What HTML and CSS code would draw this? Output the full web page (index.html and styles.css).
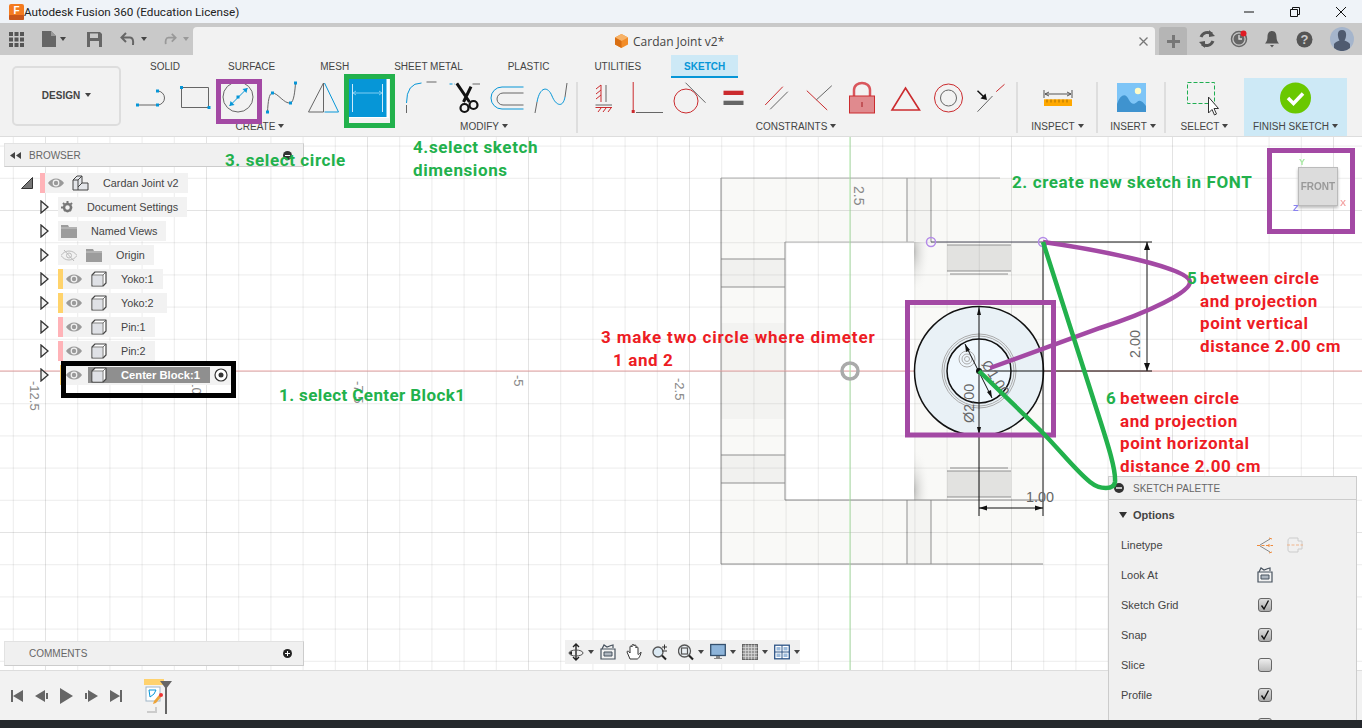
FILE: index.html
```html
<!DOCTYPE html>
<html lang="en">
<head>
  <meta charset="UTF-8" />
  <meta name="viewport" content="width=device-width, initial-scale=1.0"/>
  <title>Cardan Joint v2 - Fusion 360</title>
  <link rel="stylesheet" href="styles.css">
</head>
<body>
  <svg class="sprite" width="0" height="0">
    <symbol id="eye" viewBox="0 0 16 10">
      <path d="M0 5C4 -1 12 -1 16 5C12 11 4 11 0 5Z" fill="#9a9a9a"/>
      <circle cx="8" cy="5" r="3.4" fill="#f2f2f2"/>
      <circle cx="8" cy="5" r="2.2" fill="#9a9a9a"/>
    </symbol>
    <symbol id="cube" viewBox="0 0 16 16">
      <path d="M1 4L4 1H15V12L12 15H1Z" fill="#fff" stroke="#444" stroke-width="1.2" stroke-linejoin="round"/>
      <path d="M1.600 4.600H11.400V14.400H1.600Z" fill="#dfe1e6"/>
      <path d="M1 4H12V15M12 4L15 1" fill="none" stroke="#555" stroke-width=".8"/>
    </symbol>
    <symbol id="folder" viewBox="0 0 16 13">
      <path d="M0 0H7L8 2H16V13H0Z" fill="#9c9c9c"/>
      <path d="M0 3H16" stroke="#c8c8c8" stroke-width="1"/>
    </symbol>
    <symbol id="lookat" viewBox="0 0 16 16">
      <path d="M1 5H15V15H1Z" fill="#f2f2f2" stroke="#47525e" stroke-width="1.2"/>
      <path d="M4 8H12V12H4Z" fill="#aeb6bf" stroke="#47525e" stroke-width="1"/>
      <path d="M2 5L4 1L7 3L11 1.500L13 1V4" fill="none" stroke="#47525e" stroke-width="1.2"/>
    </symbol>
    <symbol id="check" viewBox="0 0 14 14">
      <path d="M3.500 7.500L6 11L10.500 2.500" fill="none" stroke="#111" stroke-width="1.4"/>
    </symbol>
    <symbol id="closed" viewBox="0 0 9 14">
      <path d="M1 1L8 7L1 13Z" fill="#f2f2f2" stroke="#333" stroke-width="1.3"/>
    </symbol>
  </svg>

  <div class="titlebar">
    <svg class="app-icon" width="15" height="16" viewBox="0 0 15 16">
      <rect width="15" height="16" rx="2" fill="#f47b20"/>
      <rect y="11" width="15" height="5" rx="1" fill="#c9561a"/>
      <text x="7.500" y="10" class="app-f">F</text>
    </svg>
    <span class="app-name">Autodesk Fusion 360 (Education License)</span>
    <div class="win-btns">
      <svg width="12" height="12" viewBox="0 0 12 12"><path d="M1 6H11" stroke="#111" stroke-width="1"/></svg>
      <svg width="12" height="12" viewBox="0 0 12 12"><path d="M1.500 3.500H8.500V10.500H1.500ZM3.500 3.500V1.500H10.500V8.500H8.500" fill="none" stroke="#111" stroke-width="1"/></svg>
      <svg width="12" height="12" viewBox="0 0 12 12"><path d="M1 1L11 11M11 1L1 11" stroke="#111" stroke-width="1"/></svg>
    </div>
  </div>

  <div class="tabbar">
    <div class="tab-tools">
      <svg class="t-grid" width="15" height="15" viewBox="0 0 15 15" fill="#555">
        <rect width="4" height="4"/><rect x="5.500" width="4" height="4"/><rect x="11" width="4" height="4"/>
        <rect y="5.500" width="4" height="4"/><rect x="5.500" y="5.500" width="4" height="4"/><rect x="11" y="5.500" width="4" height="4"/>
        <rect y="11" width="4" height="4"/><rect x="5.500" y="11" width="4" height="4"/><rect x="11" y="11" width="4" height="4"/>
      </svg>
      <svg class="t-doc" width="14" height="16" viewBox="0 0 14 16"><path d="M0 0H9L14 5V16H0Z" fill="#666"/><path d="M9 0V5H14" fill="#999"/></svg>
      <i class="caret t-caret1"></i>
      <svg class="t-save" width="15" height="15" viewBox="0 0 15 15"><path d="M0 0H13L15 2V15H0Z" fill="#666"/><rect x="3" y="1.500" width="8" height="4.500" fill="#c9c9c9"/><rect x="3" y="9" width="9" height="6" fill="#c9c9c9"/></svg>
      <svg class="t-undo" width="15" height="14" viewBox="0 0 15 14"><path d="M6 1L1.500 5.500L6 10M2 5.500H10C13 5.500 13.500 9 13 13" fill="none" stroke="#666" stroke-width="2"/></svg>
      <i class="caret t-caret2"></i>
      <svg class="t-redo" width="13" height="14" viewBox="0 0 15 14"><path d="M9 1L13.500 5.500L9 10M13 5.500H5C2 5.500 1.500 9 2 13" fill="none" stroke="#999" stroke-width="2"/></svg>
      <i class="caret caret-dim t-caret3"></i>
    </div>
    <div class="doc-tab">
      <svg class="doc-cube" width="13" height="14" viewBox="0 0 13 14"><path d="M6.500 0L13 3.500V10.500L6.500 14L0 10.500V3.500Z" fill="#f28c28"/><path d="M6.500 7L13 3.500L6.500 0L0 3.500Z" fill="#f7b267"/><path d="M6.500 7V14L0 10.500V3.500Z" fill="#d96f13"/></svg>
      <span class="doc-name">Cardan Joint v2*</span>
      <svg class="doc-close" width="9" height="9" viewBox="0 0 9 9"><path d="M.5 .5L8.500 8.500M8.500 .5L.5 8.500" stroke="#777" stroke-width="1.300"/></svg>
    </div>
    <div class="new-tab"><svg width="13" height="13" viewBox="0 0 13 13"><path d="M6.500 0V13M0 6.500H13" stroke="#777" stroke-width="3"/></svg></div>
    <div class="tab-status">
      <svg width="18" height="18" viewBox="0 0 18 18"><path d="M14 4A7 7 0 0 0 3 7" fill="none" stroke="#555" stroke-width="3"/><path d="M4 14A7 7 0 0 0 15 11" fill="none" stroke="#555" stroke-width="3"/><path d="M11 0L17 6L11 7ZM7 18L1 12L7 11Z" fill="#555"/></svg>
      <svg width="18" height="18" viewBox="0 0 18 18"><circle cx="9" cy="9" r="7.500" fill="none" stroke="#666" stroke-width="1.500"/><circle cx="9" cy="9" r="5.500" fill="#666"/><path d="M9 5V9H12" fill="none" stroke="#ddd" stroke-width="1.300"/><circle cx="13.500" cy="3.500" r="3" fill="#e01b24"/></svg>
      <svg class="st-bell" width="16" height="18" viewBox="0 0 16 18"><path d="M8 1C11.500 1 12.500 4 12.500 7C12.500 10 13.500 12 15 13.500H1C2.500 12 3.500 10 3.500 7C3.500 4 4.500 1 8 1Z" fill="#555"/><path d="M6 15H10L8 17.500Z" fill="#555"/></svg>
      <svg class="st-help" width="17" height="17" viewBox="0 0 17 17"><circle cx="8.500" cy="8.500" r="8" fill="#555"/><text x="8.500" y="13" class="help-mark">?</text></svg>
      <svg class="avatar" width="24" height="24" viewBox="0 0 24 24"><circle cx="12" cy="12" r="12" fill="#a5b5cc"/><path d="M12 3C15.500 3 16.500 6 16 9C15.800 11 15 12.500 14.500 13.500C17 14.500 19 15.500 20 17V21A12 12 0 0 1 4 21V17C5 15.500 7 14.500 9.500 13.500C9 12.500 8.200 11 8 9C7.500 6 8.500 3 12 3Z" fill="#4f5b70"/></svg>
    </div>
  </div>

  <div class="toolbar">
    <div class="design-btn"><span>DESIGN</span><i class="caret"></i></div>
    <div class="toolbar-main">
      <div class="ribbon-tabs">
        <span class="ribbon-tab">SOLID</span>
        <span class="ribbon-tab">SURFACE</span>
        <span class="ribbon-tab">MESH</span>
        <span class="ribbon-tab">SHEET METAL</span>
        <span class="ribbon-tab">PLASTIC</span>
        <span class="ribbon-tab">UTILITIES</span>
        <span class="ribbon-tab active">SKETCH</span>
      </div>
      <div class="ribbon">
        <div class="group group-create">
          <div class="tools">
            <div class="tool"><svg viewBox="0 0 43 40"><path d="M6.500 27H26.500A7 7 0 0 0 26.500 13" class="g"/><path d="M5 25.500h3v3h-3zM25 25.500h3v3h-3zM25 11.500h3v3h-3z" class="bf"/></svg></div>
            <div class="tool"><svg viewBox="0 0 43 40"><path d="M7.500 9.500H34.500V29.500H7.500Z" class="g"/><path d="M6 8h3v3H6zM33.500 28h3v3h-3z" class="bf"/></svg></div>
            <div class="tool"><svg viewBox="0 0 43 40"><circle cx="21" cy="19" r="15" class="g"/><path d="M12.500 28L30.500 10" class="b"/><path d="M30.500 10l-5 1 4 4zM12.500 28l5-1-4-4zM19.500 17.500h3v3h-3z" class="bf"/></svg><b class="mark mark-circle"></b></div>
            <div class="tool"><svg viewBox="0 0 43 40"><path d="M7.500 34C8 24 9 15 12.500 15C18 15 24 26 30.500 25C34 24 35 12 35.500 5" class="g"/><path d="M6 32.500h3v3H6zM11 13.500h3v3h-3zM29 23.500h3v3h-3zM34 3.500h3v3h-3z" class="bf"/></svg></div>
            <div class="tool"><svg viewBox="0 0 43 40"><path d="M5.500 34L20.500 5V34Z" class="g"/><path d="M21.500 5L35.500 34H21.500" class="b"/></svg></div>
            <div class="tool tool-dim"><svg viewBox="0 0 43 40"><rect x="2.500" y="1" width="38" height="38" fill="#0696d7"/><path d="M6.500 6V34M36.500 6V34" stroke="#cfeafa" fill="none"/><path d="M7 15H36M10 13l-3 2 3 2M33 13l3 2-3 2" stroke="#7fcdf3" fill="none"/></svg><b class="mark mark-dim"></b></div>
          </div>
          <div class="group-label">CREATE<i class="caret"></i></div>
        </div>
        <div class="group group-modify">
          <div class="tools">
            <div class="tool"><svg viewBox="0 0 43 40"><path d="M5.500 25Q5.500 5 20.500 5" class="b"/><path d="M25.500 4H35.500M5.500 27V35" class="g"/></svg></div>
            <div class="tool"><svg viewBox="0 0 43 40"><path d="M5.500 6H11" stroke="#0696d7" stroke-dasharray="3 2" fill="none"/><path d="M28.500 6H36" class="g"/><path d="M12.800 5.300L25.500 24M27 8.600L19.500 24" stroke="#111" stroke-width="3" fill="none"/><circle cx="20.500" cy="30" r="4" fill="none" stroke="#111" stroke-width="2.200"/><circle cx="29.500" cy="27" r="4" fill="none" stroke="#111" stroke-width="2.200"/></svg></div>
            <div class="tool"><svg viewBox="0 0 43 40"><path d="M36.500 9H15A11 11 0 0 0 15 31H36.500" class="b"/><path d="M36.500 15H16A6 6 0 0 0 16 27H36.500" class="g"/></svg></div>
            <div class="tool"><svg viewBox="0 0 43 40"><path d="M7 24C10 8 18 8 22 18C26 28 33 30 35 19" class="b"/><path d="M7 24L5 35M35 19L37 5" class="g"/></svg></div>
          </div>
          <div class="group-label">MODIFY<i class="caret"></i></div>
        </div>
        <div class="group group-constraints">
          <div class="tools">
            <div class="tool"><svg viewBox="0 0 43 40"><path d="M18 7V24M13 11l5-4M13 16l5-4M13 21l5-4M12.500 29.500H29M15 34l3-4M20 34l3-4M25 34l3-4" class="r"/><path d="M23 7V24M12.500 27H29" class="g"/></svg></div>
            <div class="tool"><svg viewBox="0 0 43 40"><path d="M7.200 4V32" class="r"/><rect x="5.700" y="32" width="3" height="3" fill="#cb2b2e"/><path d="M10 34.500H37" class="g"/></svg></div>
            <div class="tool"><svg viewBox="0 0 43 40"><circle cx="17" cy="23" r="12" class="r"/><path d="M16.500 4.700L36.500 24.700" class="g"/></svg></div>
            <div class="tool"><svg viewBox="0 0 43 40"><rect x="11.500" y="12.700" width="20" height="4.300" fill="#cb2b2e"/><rect x="11.500" y="22.700" width="20" height="4.300" fill="#666"/></svg></div>
            <div class="tool"><svg viewBox="0 0 43 40"><path d="M10.200 27L27.800 8.700" class="r"/><path d="M15.200 31.300L32.800 13.700" class="g"/></svg></div>
            <div class="tool"><svg viewBox="0 0 43 40"><path d="M8.800 12.700L29.200 32" class="r"/><path d="M18.200 22L33.800 7.700" class="g"/></svg></div>
            <div class="tool"><svg viewBox="0 0 43 40"><path d="M13 18V12C13 2.500 29 2.500 29 12V18" fill="none" stroke="#d9565c" stroke-width="2.500"/><rect x="8.500" y="18" width="25" height="17" fill="#e08a8e" stroke="#cb2b2e"/><path d="M21 24V29" stroke="#a51d22"/></svg></div>
            <div class="tool"><svg viewBox="0 0 43 40"><path d="M21.500 10L35.500 32H8Z" class="r r2"/></svg></div>
            <div class="tool"><svg viewBox="0 0 43 40"><circle cx="21.500" cy="20" r="14" class="r"/><circle cx="21.500" cy="20" r="8" class="g"/></svg></div>
            <div class="tool"><svg viewBox="0 0 43 40"><path d="M7.500 33.700L22.500 18" class="g"/><path d="M26.200 13.700L34.500 6.300" class="r"/><path d="M7.500 12.700L14 19" stroke="#111" stroke-width="1.500" fill="none"/><path d="M17 22L10.500 20.500L15.500 15.500Z" fill="#111"/></svg></div>
          </div>
          <div class="group-label">CONSTRAINTS<i class="caret"></i></div>
        </div>
        <div class="group group-inspect">
          <div class="tools">
            <div class="tool"><svg viewBox="0 0 43 40"><path d="M8 12V20M36 12V20M9 16H35M13 14l-4 2 4 2M31 14l4 2-4 2" stroke="#555" fill="none"/><rect x="8" y="21.300" width="28" height="6.700" fill="#ffa800"/><path d="M11 21.500v3M15 21.500v3M19 21.500v3M23 21.500v3M27 21.500v3M31 21.500v3" stroke="#a86f00"/></svg></div>
          </div>
          <div class="group-label">INSPECT<i class="caret"></i></div>
        </div>
        <div class="group group-insert">
          <div class="tools">
            <div class="tool"><svg viewBox="0 0 43 40"><rect x="7" y="5" width="29" height="29" fill="#7ec5f7"/><circle cx="28" cy="13" r="3.200" fill="#fffcc8"/><path d="M7 26C11 15 16 15 19 22C21 26 24 27 27 24C30 21 33 24 36 28V34H7Z" fill="#3f93cf"/></svg></div>
          </div>
          <div class="group-label">INSERT<i class="caret"></i></div>
        </div>
        <div class="group group-select">
          <div class="tools">
            <div class="tool"><svg viewBox="0 0 43 40"><rect x="4.500" y="4.500" width="27" height="21" fill="none" stroke="#1fae51" stroke-dasharray="4 2"/><path d="M25.500 19V35L29 31.500L31.500 37L33.500 36L31 30.500H35.500Z" fill="#fff" stroke="#333"/></svg></div>
          </div>
          <div class="group-label">SELECT<i class="caret"></i></div>
        </div>
        <div class="group group-finish">
          <div class="tools">
            <div class="tool"><svg viewBox="0 0 43 40"><circle cx="21.500" cy="20" r="15.500" fill="#6ac800"/><path d="M14 20L19.500 25.500L29 15.500" fill="none" stroke="#fff" stroke-width="3.500"/></svg></div>
          </div>
          <div class="group-label">FINISH SKETCH<i class="caret"></i></div>
        </div>
      </div>
    </div>
  </div>

  <div class="workspace">
    <div class="canvas">
      <svg class="layer" viewBox="0 137 1362 533">
        <defs>
          <pattern id="grid" patternUnits="userSpaceOnUse" x="45" y="49" width="161" height="161">
            <path d="M32.700 0V161M64.900 0V161M97.100 0V161M129.300 0V161M0 32.700H161M0 64.900H161M0 97.100H161M0 129.300H161" stroke="#000" stroke-opacity=".07" fill="none"/>
            <path d="M.5 0V161M0 .5H161" stroke="#000" stroke-opacity=".11" fill="none"/>
          </pattern>
          <radialGradient id="shade-top" cx="0" cy=".2" r=".9">
            <stop offset="0" stop-color="#c4c4c2"/><stop offset="1" stop-color="#f9f9f7" stop-opacity="0"/>
          </radialGradient>
          <radialGradient id="shade-bottom" cx="0" cy=".8" r=".9">
            <stop offset="0" stop-color="#c4c4c2"/><stop offset="1" stop-color="#f9f9f7" stop-opacity="0"/>
          </radialGradient>
        </defs>
        <rect x="721" y="178" width="322" height="386" fill="#f9f9f7"/>
        <rect x="721" y="259" width="64" height="28" fill="#f1f1ef"/>
        <rect x="721" y="455" width="64" height="28" fill="#f1f1ef"/>
        <rect x="721" y="323" width="64" height="96" fill="#f3f3f1"/>
        <rect x="907" y="178" width="24" height="64" fill="#f4f4f2"/>
        <rect x="907" y="500" width="24" height="64" fill="#f4f4f2"/>
        <rect x="785" y="242" width="129" height="258" fill="#fff"/>
        <rect x="914" y="242" width="18" height="48" fill="url(#shade-top)"/>
        <rect x="914" y="452" width="18" height="48" fill="url(#shade-bottom)"/>
        <rect x="947" y="245" width="64" height="26" fill="#e2e2e0"/>
        <rect x="947" y="471" width="64" height="26" fill="#e2e2e0"/>
        <path d="M721 178V564H1043M721 259H785M721 287H785M721 455H785M721 483H785M907 178V242M931 178V242M907 500V564M931 500V564M785 242V500H1043M947 245H1011M947 271H1011M950 274H1008M950 468H1008M947 471H1011M947 497H1011" class="edge"/>
        <path d="M721 178H1000M785 242H914" class="edge-soft"/>
        <rect x="0" y="137" width="1362" height="533" fill="url(#grid)"/>
        <path d="M0 371H1362" stroke="#e8a3a3"/>
        <path d="M850 137V670" stroke="#a9e4a3"/>
        <circle cx="850" cy="371" r="8" fill="none" stroke="#aaa" stroke-width="3.500"/>

        <circle cx="979" cy="371" r="64.500" fill="#e9f1f6" stroke="#111" stroke-width="1.500"/>
        <circle cx="979" cy="371" r="37" fill="none" stroke="#aaa"/>
        <circle cx="979" cy="371" r="35" fill="none" stroke="#aaa"/>
        <circle cx="979" cy="371" r="32" fill="#eff7fd" stroke="#111" stroke-width="1.500"/>
        <circle cx="967" cy="359" r="8" fill="none" stroke="#aaa"/>
        <circle cx="967" cy="359" r="5" fill="none" stroke="#aaa"/>
        <circle cx="967" cy="359" r="2.500" fill="none" stroke="#aaa"/>
        <path d="M931 242H1043" stroke="#445"/>
        <path d="M1043 242V516M1043 242H1152M979 371H1152M979 307V516M1147 242V371M979 508H1043M965 344L992 398" stroke="#111" fill="none"/>
        <path d="M979 307l-2 8h4zM979 435l-2-8h4zM1147 242l-3 8h6zM1147 371l-3-8h6zM979 508l8-2.500v5zM1043 508l-8-2.500v5zM965 344l1 8 4-2zM992 398l-1-8-4 2z" fill="#111"/>
        <circle cx="979" cy="371" r="3" fill="#111"/>
        <circle cx="931" cy="242" r="4.500" fill="none" stroke="#b48be8" stroke-width="1.500"/>
        <circle cx="1043" cy="242" r="4.500" fill="none" stroke="#b48be8" stroke-width="1.500"/>

        <text x="0" y="0" class="dim" transform="translate(1140 358) rotate(-90)">2.00</text>
        <text x="1026" y="502" class="dim">1.00</text>
        <text x="0" y="0" class="dim" transform="translate(974 423) rotate(-90)">Ø2.00</text>
        <text x="0" y="0" class="dim" transform="translate(981 364) rotate(58)">Ø1.00</text>

        <text x="0" y="0" class="axis axis-big" transform="translate(854 186) rotate(90)">2.5</text>
        <text x="0" y="0" class="axis" transform="translate(30 381) rotate(90)">-12.5</text>
        <text x="0" y="0" class="axis" transform="translate(192 376) rotate(90)">-10</text>
        <text x="0" y="0" class="axis" transform="translate(354 381) rotate(90)">-7.5</text>
        <text x="0" y="0" class="axis" transform="translate(514 375) rotate(90)">-5</text>
        <text x="0" y="0" class="axis" transform="translate(675 378) rotate(90)">-2.5</text>
      </svg>

      <div class="browser">
        <div class="panel-head">
          <svg class="collapse" width="11" height="7" viewBox="0 0 11 7"><path d="M5 0V7L0 3.500ZM11 0V7L6 3.500Z" fill="#444"/></svg>
          <span class="panel-title">BROWSER</span>
          <svg class="panel-btn" width="9" height="9" viewBox="0 0 9 9"><circle cx="4.500" cy="4.500" r="4.500" fill="#333"/><path d="M2 4.500H7" stroke="#fff"/></svg>
        </div>
        <div class="tree">
          <div class="row row-root">
            <svg class="arrow-open" width="12" height="12" viewBox="0 0 12 12"><path d="M11.500 .5V11.500H.5Z" fill="#777" stroke="#333"/></svg>
            <div class="node node-root strip-pink">
              <svg class="ic-eye"><use href="#eye"/></svg>
              <svg class="ic-cubes" width="17" height="16" viewBox="0 0 17 16"><path d="M1 5L5 1H10V8H16V15H1Z" fill="#e4e6ea" stroke="#444"/><path d="M1 5H6V15M6 5L10 1M10 8L6 12" fill="none" stroke="#444"/></svg>
              <span class="name name-root">Cardan Joint v2</span>
            </div>
          </div>
          <div class="row">
            <svg class="arrow"><use href="#closed"/></svg>
            <div class="node">
              <svg class="ic-gear" width="13" height="13" viewBox="0 0 13 13"><circle cx="6.500" cy="6.500" r="3.500" fill="none" stroke="#777" stroke-width="2.500"/><path d="M6.500 0V13M0 6.500H13M2 2L11 11M11 2L2 11" stroke="#777" stroke-width="2" stroke-dasharray="2 7.200"/></svg>
              <span class="name name-doc">Document Settings</span>
            </div>
          </div>
          <div class="row">
            <svg class="arrow"><use href="#closed"/></svg>
            <div class="node">
              <svg class="ic-folder"><use href="#folder"/></svg>
              <span class="name name-views">Named Views</span>
            </div>
          </div>
          <div class="row">
            <svg class="arrow"><use href="#closed"/></svg>
            <div class="node">
              <svg class="ic-eye-off" width="16" height="11" viewBox="0 0 16 11"><path d="M0 5.500C4 -.5 12 -.5 16 5.500C12 11.500 4 11.500 0 5.500Z" fill="none" stroke="#bbb"/><circle cx="8" cy="5.500" r="2.500" fill="none" stroke="#bbb"/><path d="M3 0L13 11" stroke="#bbb"/></svg>
              <svg class="ic-folder ic-folder-b"><use href="#folder"/></svg>
              <span class="name name-origin">Origin</span>
            </div>
          </div>
          <div class="row">
            <svg class="arrow"><use href="#closed"/></svg>
            <div class="node strip-yellow">
              <svg class="ic-eye"><use href="#eye"/></svg>
              <svg class="ic-cube"><use href="#cube"/></svg>
              <span class="name">Yoko:1</span>
            </div>
          </div>
          <div class="row">
            <svg class="arrow"><use href="#closed"/></svg>
            <div class="node strip-yellow">
              <svg class="ic-eye"><use href="#eye"/></svg>
              <svg class="ic-cube"><use href="#cube"/></svg>
              <span class="name name-yoko2">Yoko:2</span>
            </div>
          </div>
          <div class="row">
            <svg class="arrow"><use href="#closed"/></svg>
            <div class="node strip-pink">
              <svg class="ic-eye"><use href="#eye"/></svg>
              <svg class="ic-cube"><use href="#cube"/></svg>
              <span class="name">Pin:1</span>
            </div>
          </div>
          <div class="row">
            <svg class="arrow"><use href="#closed"/></svg>
            <div class="node strip-pink">
              <svg class="ic-eye"><use href="#eye"/></svg>
              <svg class="ic-cube"><use href="#cube"/></svg>
              <span class="name">Pin:2</span>
            </div>
          </div>
          <div class="row row-selected">
            <svg class="arrow"><use href="#closed"/></svg>
            <div class="node strip-yellow">
              <svg class="ic-eye"><use href="#eye"/></svg>
              <div class="selected">
                <svg class="ic-cube"><use href="#cube"/></svg>
                <span class="name name-selected">Center Block:1</span>
              </div>
              <svg class="ic-radio" width="14" height="14" viewBox="0 0 14 14"><circle cx="7" cy="7" r="6" fill="#fff" stroke="#333" stroke-width="1.200"/><circle cx="7" cy="7" r="2.500" fill="#333"/></svg>
            </div>
            <b class="mark-black"></b>
          </div>
        </div>
      </div>

      <div class="comments">
        <span class="panel-title">COMMENTS</span>
        <svg class="panel-btn" width="9" height="9" viewBox="0 0 9 9"><circle cx="4.500" cy="4.500" r="4.500" fill="#222"/><path d="M2 4.500H7M4.500 2V7" stroke="#fff"/></svg>
      </div>

      <div class="viewcube">
        <span class="cube-face">FRONT</span>
        <span class="cube-y">Y</span>
        <span class="cube-z">Z</span>
        <span class="cube-x">X</span>
      </div>

      <div class="navbar">
        <svg class="nav-ic" viewBox="0 0 16 18"><path d="M8 1V17M5 4L8 1L11 4M5 14L8 17L11 14" fill="none" stroke="#222" stroke-width="1.400"/><ellipse cx="8" cy="10" rx="7" ry="3" fill="none" stroke="#555"/><path d="M1 10L4 8V12Z" fill="#222"/></svg><i class="caret nav-caret"></i>
        <svg class="nav-ic nav-solo"><use href="#lookat"/></svg>
        <svg class="nav-ic nav-solo" viewBox="0 0 16 18"><path d="M4 16L1 9C1 7.500 3 8 4 10V4C4 2.500 6 2.500 6 4V2.500C6 1 8 1 8 2.500V3C8 1.500 10 1.500 10 3V5C10 3.500 12 3.500 12 5V11C12 13 15 9 15 9C15 11 13 16 11 16Z" fill="#fff" stroke="#333"/></svg>
        <svg class="nav-ic nav-solo" viewBox="0 0 16 18"><circle cx="6" cy="9" r="5" fill="#dbe9f3" stroke="#555" stroke-width="1.300"/><path d="M10 12.500L14 16.500" stroke="#222" stroke-width="2"/><path d="M10 4H15M12.500 1.500V6.500M10 8H15" stroke="#333"/></svg>
        <svg class="nav-ic" viewBox="0 0 16 18"><circle cx="6.500" cy="8" r="6" fill="#eaf0f4" stroke="#555" stroke-width="1.300"/><rect x="3.500" y="5" width="6" height="6" fill="none" stroke="#555" stroke-width="1.200"/><path d="M11 12.500L15 16.500" stroke="#222" stroke-width="2.200"/></svg><i class="caret nav-caret"></i>
        <svg class="nav-ic" viewBox="0 0 16 18"><rect x=".7" y="1.500" width="14.600" height="11" fill="#8db4da" stroke="#34506e" stroke-width="1.300"/><path d="M6 13H10V15H12V16H4V15H6Z" fill="#888"/></svg><i class="caret nav-caret"></i>
        <svg class="nav-ic" viewBox="0 0 16 18"><rect x=".5" y="1.500" width="15" height="15" fill="#9a9a9a" stroke="#666"/><path d="M3.500 1.500V16.500M6.500 1.500V16.500M9.500 1.500V16.500M12.500 1.500V16.500M.5 4.500H15.500M.5 7.500H15.500M.5 10.500H15.500M.5 13.500H15.500" stroke="#ddd" stroke-width=".7"/></svg><i class="caret nav-caret"></i>
        <svg class="nav-ic" viewBox="0 0 16 18"><rect x=".7" y="2.200" width="14.600" height="13.600" fill="#fff" stroke="#2d5486" stroke-width="1.300"/><path d="M8 2V16M1 9H15" stroke="#2d5486"/><path d="M2.500 4H6.500V7.500H2.500ZM9.500 4H13.500V7.500H9.500ZM2.500 10.500H6.500V14H2.500ZM9.500 10.500H13.500V14H9.500Z" fill="#9cbbdc"/></svg><i class="caret nav-caret"></i>
      </div>

      <svg class="layer layer-notes" viewBox="0 137 1362 533">
        <rect x="907.500" y="302.500" width="146" height="132.500" class="frame"/>
        <rect x="1269.500" y="150.500" width="83" height="81" class="frame"/>
        <path d="M1043 242C1100 250 1190 268 1190 282C1190 292 1150 312 1100 328L990 368" class="scrawl-purple"/>
        <path d="M1043 242L1100 420C1108 445 1116 470 1115 482C1114 490 1100 490 1090 482C1075 470 1060 450 1040 430L979 371" class="scrawl-green"/>
        <text x="225" y="166" class="note green">3. select circle</text>
        <text x="413" y="153" class="note green">4.select sketch</text>
        <text x="413" y="176" class="note green">dimensions</text>
        <text x="1012" y="188" class="note green">2. create new sketch in FONT</text>
        <text x="279" y="401" class="note green note-tight">1. select Center Block1</text>
        <text x="601" y="343" class="note red note-wide">3 make two circle where dimeter</text>
        <text x="613" y="366" class="note red">1 and 2</text>
        <text x="1187" y="284" class="note green">5</text>
        <text x="1200" y="284" class="note red">between circle</text>
        <text x="1200" y="307" class="note red">and projection</text>
        <text x="1200" y="329" class="note red">point vertical</text>
        <text x="1200" y="352" class="note red">distance 2.00 cm</text>
        <text x="1106" y="404" class="note green">6</text>
        <text x="1120" y="404" class="note red">between circle</text>
        <text x="1120" y="427" class="note red">and projection</text>
        <text x="1120" y="449" class="note red">point horizontal</text>
        <text x="1120" y="472" class="note red">distance 2.00 cm</text>
      </svg>
    </div>

    <div class="timeline">
      <svg class="tl-ctrl" width="12" height="12" viewBox="0 0 12 12"><path d="M0 0H2V12H0ZM12 0V12L2 6Z" fill="#666"/></svg>
      <svg class="tl-ctrl" width="13" height="12" viewBox="0 0 13 12"><path d="M10 0V12L0 6ZM11 3H13V9H11Z" fill="#666"/></svg>
      <svg class="tl-ctrl" width="13" height="16" viewBox="0 0 13 16"><path d="M0 0L13 8L0 16Z" fill="#666"/></svg>
      <svg class="tl-ctrl" width="13" height="12" viewBox="0 0 13 12"><path d="M3 0V12L13 6ZM0 3H2V9H0Z" fill="#666"/></svg>
      <svg class="tl-ctrl" width="12" height="12" viewBox="0 0 12 12"><path d="M0 0V12L10 6ZM10 0H12V12H10Z" fill="#666"/></svg>
      <svg class="tl-sketch" width="30" height="36" viewBox="0 0 30 36">
        <rect x="0" y="0" width="20" height="6" fill="#ffd26e"/>
        <rect x="2" y="8" width="14" height="14" fill="#fff" stroke="#9fb6c8"/>
        <path d="M5 11H12L10 15L6 18Z" fill="none" stroke="#0696d7"/>
        <path d="M10 22L15 16L17 18L12 24L9 25Z" fill="#eda43a"/>
        <circle cx="17" cy="16" r="2" fill="#e33"/>
        <path d="M3 33H12V28" fill="none" stroke="#ccc" stroke-width="2"/>
        <path d="M16 2H28L22 10Z" fill="#666"/>
        <path d="M22 8V35" stroke="#666" stroke-width="2"/>
      </svg>
    </div>

    <div class="palette">
      <div class="palette-head">
        <svg class="palette-min" width="10" height="10" viewBox="0 0 10 10"><circle cx="5" cy="5" r="5" fill="#333"/><path d="M2 5H8" stroke="#fff" stroke-width="1.400"/></svg>
        <span class="panel-title">SKETCH PALETTE</span>
      </div>
      <div class="palette-body">
        <div class="opt-head"><i class="opt-arrow"></i>Options</div>
        <div class="opt"><span class="opt-label">Linetype</span>
          <svg class="opt-ic" width="17" height="17" viewBox="0 0 17 17"><path d="M0 8.500H16" stroke="#ee8a3c" stroke-dasharray="3 1.500"/><path d="M3 8L13 2M3 9L13 15" stroke="#888"/><path d="M12 1l3 1M12 16l3-1M12 7v3" stroke="#ee8a3c"/></svg>
          <svg class="opt-ic opt-ic-b" width="16" height="16" viewBox="0 0 16 16"><path d="M3 1H11V4H15V12H11V15H3C1 15 1 13 1 12V4C1 2 2 1 3 1Z" fill="none" stroke="#ccc"/><path d="M0 8H16" stroke="#f0b48a" stroke-dasharray="3 1.500"/></svg>
        </div>
        <div class="opt"><span class="opt-label">Look At</span><svg class="opt-ic" width="16" height="16"><use href="#lookat"/></svg></div>
        <div class="opt"><span class="opt-label">Sketch Grid</span><span class="check on"><svg width="14" height="14"><use href="#check"/></svg></span></div>
        <div class="opt"><span class="opt-label">Snap</span><span class="check on"><svg width="14" height="14"><use href="#check"/></svg></span></div>
        <div class="opt"><span class="opt-label">Slice</span><span class="check"></span></div>
        <div class="opt"><span class="opt-label">Profile</span><span class="check on"><svg width="14" height="14"><use href="#check"/></svg></span></div>
        <div class="opt"><span class="opt-label"></span><span class="check on"><svg width="14" height="14"><use href="#check"/></svg></span></div>
      </div>
    </div>
  </div>

  <div class="statusbar"></div>
</body>
</html>
```

FILE: styles.css
```css
html, body {
  margin: 0;
  padding: 0;
  height: 100%;
  overflow: hidden;
}

body {
  display: flex;
  flex-direction: column;
  font-family: "Liberation Sans", Arial, sans-serif;
  color: #444;
  background: #fff;
}

.sprite {
  position: absolute;
}

.caret {
  display: inline-block;
  width: 0;
  height: 0;
  border-left: 3px solid transparent;
  border-right: 3px solid transparent;
  border-top: 4px solid #444;
}

.caret-dim {
  border-top-color: #999;
}

/* title bar */
.titlebar {
  height: 23px;
  flex: none;
  display: flex;
  align-items: center;
  background: #eff3f8;
  padding-left: 9px;
}

.app-f {
  font: bold 10px "Liberation Sans", sans-serif;
  fill: #fff;
  text-anchor: middle;
}

.app-name {
  margin-left: 0;
  font: 11.7px Roboto, sans-serif;
  color: #222;
}

.win-btns {
  margin-left: auto;
  display: flex;
  gap: 34px;
  padding-right: 15px;
}

/* tab bar */
.tabbar {
  height: 32px;
  flex: none;
  display: flex;
  background: #c9c9c9;
}

.tab-tools {
  width: 193px;
  flex: none;
  display: flex;
  align-items: center;
  padding-left: 9px;
  box-sizing: border-box;
}

.t-doc { margin-left: 18px; }
.t-caret1 { margin-left: 4px; }
.t-save { margin-left: 21px; }
.t-undo { margin-left: 18px; }
.t-caret2 { margin-left: 6px; }
.t-redo { margin-left: 17px; }
.t-caret3 { margin-left: 6px; }

.doc-tab {
  flex: 1;
  margin-top: 4px;
  display: flex;
  align-items: center;
  position: relative;
  background: #f2f2f2;
  border-radius: 4px 4px 0 0;
  padding-left: 422px;
}

.doc-name {
  margin-left: 5px;
  font: 12px "Open Sans", sans-serif;
  color: #444;
}

.doc-close {
  margin-left: auto;
  margin-right: 7px;
}

.new-tab {
  width: 28px;
  flex: none;
  margin: 4px 0 0 4px;
  display: flex;
  align-items: center;
  justify-content: center;
  background: #b5b5b5;
  border-radius: 3px 3px 0 0;
}

.tab-status {
  width: 175px;
  flex: none;
  display: flex;
  align-items: center;
  gap: 14px;
  padding-left: 11px;
  box-sizing: border-box;
}

.st-bell { margin-left: 2px; }
.st-help { margin-left: 2px; }
.avatar { margin-left: 3px; }

/* toolbar */
.toolbar {
  height: 82px;
  flex: none;
  display: flex;
  background: #f2f2f2;
  border-bottom: 1px solid #ddd;
  box-sizing: border-box;
}

.design-btn {
  width: 109px;
  height: 60px;
  margin: 11px 10px 0 12px;
  flex: none;
  box-sizing: border-box;
  border: 2px solid #ddd;
  border-radius: 5px;
  padding-bottom: 2px;
  display: flex;
  align-items: center;
  justify-content: center;
  gap: 5px;
  font-size: 10px;
  font-weight: bold;
  color: #444;
}

.toolbar-main {
  flex: 1;
  display: flex;
  flex-direction: column;
}

.ribbon-tabs {
  height: 23px;
  flex: none;
  display: flex;
  gap: 19px;
  padding-left: 6px;
}

.ribbon-tab {
  padding: 0 13px;
  line-height: 23px;
  font-size: 10px;
  color: #444;
}

.ribbon-tab:first-child {
  margin-right: 3px;
}

.ribbon-tab.active {
  height: 23px;
  box-sizing: border-box;
  background: #cde9f6;
  border-bottom: 2px solid #0696d7;
  color: #0696d7;
  font-weight: bold;
  margin-left: -2px;
}

.ribbon {
  flex: 1;
  display: flex;
}

.group {
  display: flex;
  flex-direction: column;
  align-items: center;
  box-sizing: border-box;
}

.group-create { width: 258px; margin-right: 12px; }
.group-modify { width: 172px; margin-right: 10px; }
.group-constraints { width: 430px; margin-right: 5px; }
.group-inspect { width: 79px; }
.group-insert { width: 68px; }
.group-select { width: 79px; }
.group-finish { width: 103px; background: #cde9f6; }

.group-modify .group-label {
  padding-right: 6px;
}

.group-constraints .group-label {
  padding-right: 4px;
}

.group-insert .group-label {
  padding-left: 4px;
}

.group-modify,
.group-constraints,
.group-inspect,
.group-insert {
  position: relative;
}

.group-modify::after,
.group-constraints::after,
.group-inspect::after,
.group-insert::after {
  content: "";
  position: absolute;
  top: 4px;
  bottom: 3px;
  right: -1px;
  width: 2px;
  background: #dedede;
}

.group-modify::after { right: -5px; }
.group-constraints::after { right: -5px; }

.tools {
  display: flex;
  height: 40px;
  flex: none;
}

.tool {
  width: 43px;
  height: 40px;
  position: relative;
}

.tool svg {
  display: block;
  width: 43px;
  height: 40px;
}

.g { fill: none; stroke: #666; stroke-width: 1; }
.b { fill: none; stroke: #0696d7; stroke-width: 1; }
.r { fill: none; stroke: #cb2b2e; stroke-width: 1; }
.r2 { stroke-width: 1.6; }
.bf { fill: #0696d7; }

.mark {
  position: absolute;
  box-sizing: border-box;
  border-style: solid;
  border-width: 5px;
}

.mark-circle {
  left: -1px;
  top: 1px;
  width: 46px;
  height: 45px;
  border-color: #a349a4;
}

.mark-dim {
  left: -2px;
  top: -4px;
  width: 51px;
  height: 54px;
  border-color: #22b14c;
}

.tool-dim {
  background: linear-gradient(#fff, #fff) no-repeat 2px 1px / 44px 45px;
}

.group-label {
  display: flex;
  align-items: center;
  gap: 3px;
  height: 16px;
  font-size: 10px;
  color: #444;
}

/* workspace */
.workspace {
  flex: 1;
  display: flex;
  flex-direction: column;
  position: relative;
  overflow: hidden;
}

.canvas {
  flex: 1;
  position: relative;
  overflow: hidden;
  background: #fff;
}

.layer {
  position: absolute;
  left: 0;
  top: 0;
  width: 1362px;
  height: 533px;
}

.layer-notes {
  z-index: 5;
  pointer-events: none;
}

.edge { fill: none; stroke: #8f8f8f; stroke-width: 1; }
.edge-soft { fill: none; stroke: #b4b4b4; stroke-width: 1; }
.dim { font: 14.4px "Liberation Sans", sans-serif; fill: #666; }
.axis { font: 13px "Liberation Sans", sans-serif; fill: #888; }
.axis-big { font-size: 14px; }
.frame { fill: none; stroke: #a349a4; stroke-width: 5; }
.scrawl-purple { fill: none; stroke: #a349a4; stroke-width: 4.5; }
.scrawl-green { fill: none; stroke: #22b14c; stroke-width: 4.5; }
.note { font: bold 17px Roboto, sans-serif; letter-spacing: .6px; }
.note-tight { letter-spacing: .4px; }
.note-wide { letter-spacing: .85px; }
.green { fill: #22b14c; }
.red { fill: #ed1c24; }

/* browser */
.browser {
  position: absolute;
  left: 4px;
  top: 6px;
  width: 300px;
}

.panel-head,
.comments {
  height: 24px;
  box-sizing: border-box;
  display: flex;
  align-items: center;
  background: #f0f0f0;
  border: 1px solid #ccc;
  border-top-color: #e2e2e2;
  border-left-color: #e2e2e2;
}

.collapse {
  margin-left: 5px;
}

.panel-title {
  font-size: 10px;
  color: #666;
}

.panel-head .panel-title {
  margin-left: 8px;
}

.panel-btn {
  margin-left: auto;
  margin-right: 11px;
}

.tree {
  margin-left: -4px;
  padding-top: 6px;
}

.row {
  display: flex;
  align-items: center;
  height: 20px;
  margin-bottom: 4px;
  padding-left: 40px;
  position: relative;
}

.row-root {
  padding-left: 21px;
}

.arrow {
  width: 9px;
  height: 14px;
  flex: none;
  margin-right: 9px;
}

.arrow-open {
  margin-right: 7px;
}

.node {
  height: 20px;
  display: flex;
  align-items: center;
  background: #f2f2f2;
  padding-right: 9px;
  box-sizing: border-box;
}

.strip-pink { border-left: 5px solid #ffb3b8; }
.strip-yellow { border-left: 5px solid #ffd36b; }

.ic-eye {
  width: 16px;
  height: 10px;
  margin-left: 3px;
}

.ic-cube {
  width: 16px;
  height: 16px;
  margin-left: 9px;
}

.ic-cubes { margin-left: 8px; }
.ic-gear { margin-left: 3px; }
.ic-eye-off { margin-left: 3px; }

.ic-folder {
  width: 16px;
  height: 13px;
  margin-left: 3px;
}

.ic-folder-b { margin-left: 9px; }

.name {
  margin-left: 14px;
  font-size: 10.8px;
  color: #444;
  white-space: nowrap;
}

.name-root { margin-left: 14px; }
.name-doc { margin-left: 13px; }
.name-views { margin-left: 14px; }
.name-yoko2 { padding-right: 4px; }

.row-selected .node {
  border-left-width: 3px;
  margin-left: 2px;
  padding-right: 0;
  width: 172px;
}

.selected {
  display: flex;
  align-items: center;
  width: 122px;
  height: 16px;
  margin-left: 6px;
  background: #8f8f8f;
}

.selected .ic-cube {
  margin-left: 3px;
}

.name-selected {
  margin-left: 14px;
  font-size: 11.2px;
  font-weight: bold;
  color: #fff;
}

.ic-radio {
  margin-left: 4px;
}

.mark-black {
  position: absolute;
  left: 61px;
  top: -4px;
  width: 175px;
  height: 37px;
  box-sizing: border-box;
  border: 5px solid #000;
}

/* comments */
.comments {
  position: absolute;
  left: 4px;
  top: 504px;
  width: 300px;
  height: 25px;
  padding-left: 24px;
}

/* view cube */
.viewcube {
  position: absolute;
  left: 1298px;
  top: 30px;
  width: 40px;
  height: 39px;
  box-sizing: border-box;
  background: #dcdcdc;
  border: 1px solid #bbb;
  box-shadow: 0 2px 3px #bbb;
  filter: blur(.4px);
  display: flex;
  align-items: center;
  justify-content: center;
}

.cube-face {
  font-size: 10px;
  font-weight: bold;
  color: #999;
}

.cube-y,
.cube-z,
.cube-x {
  position: absolute;
  font-size: 9px;
  font-weight: bold;
}

.cube-y { left: 0; top: -11px; color: #a5e8a0; }
.cube-z { left: -6px; top: 35px; color: #8a82f0; }
.cube-x { left: 41px; top: 30px; color: #f4a6a6; }

/* nav bar */
.navbar {
  position: absolute;
  left: 565px;
  top: 503px;
  width: 235px;
  height: 24px;
  box-sizing: border-box;
  padding-left: 3px;
  display: flex;
  align-items: center;
  background: #f0f0f0;
}

.nav-ic {
  width: 16px;
  height: 18px;
  flex: none;
  margin-right: 4px;
}

.nav-solo {
  margin-right: 10px;
}

.nav-caret {
  margin-right: 6px;
}

/* timeline */
.timeline {
  height: 50px;
  flex: none;
  box-sizing: border-box;
  display: flex;
  align-items: center;
  padding-left: 11px;
  background: #f2f2f2;
  border-top: 1px solid #ddd;
  gap: 12px;
}

.tl-sketch {
  margin-left: 10px;
  margin-top: 2px;
}

/* palette */
.palette {
  position: absolute;
  left: 1108px;
  top: 339px;
  width: 249px;
  bottom: 0;
  overflow: hidden;
  z-index: 4;
  background: #f0f0f0;
  border: 1px solid #ccc;
  border-bottom: 0;
  box-sizing: border-box;
}

.palette-head {
  height: 23px;
  display: flex;
  align-items: center;
  border-bottom: 1px solid #ccc;
  box-sizing: border-box;
}

.palette-min {
  margin-left: 5px;
  margin-right: 9px;
}

.opt-head {
  height: 30px;
  display: flex;
  align-items: center;
  padding-left: 10px;
  font-size: 11px;
  font-weight: bold;
  color: #444;
}

.opt-arrow {
  width: 0;
  height: 0;
  margin-right: 6px;
  border-left: 4px solid transparent;
  border-right: 4px solid transparent;
  border-top: 6px solid #333;
}

.opt {
  height: 30px;
  display: flex;
  align-items: center;
  padding-left: 12px;
}

.opt-label {
  width: 136px;
  flex: none;
  font-size: 11px;
  color: #444;
}

.opt-ic-b {
  margin-left: 13px;
}

.check {
  width: 14px;
  height: 14px;
  margin-left: 1px;
  box-sizing: border-box;
  border: 1px solid #666;
  border-radius: 3px;
  background: linear-gradient(#eee, #bbb);
  display: flex;
  align-items: center;
  justify-content: center;
}

.check svg {
  flex: none;
}

.check.on {
  background: linear-gradient(#ddd, #aaa);
}

.statusbar {
  height: 8px;
  flex: none;
  background: #25282c;
}

.help-mark {
  font: bold 13px "Liberation Sans", sans-serif;
  fill: #c9c9c9;
  text-anchor: middle;
}
```
